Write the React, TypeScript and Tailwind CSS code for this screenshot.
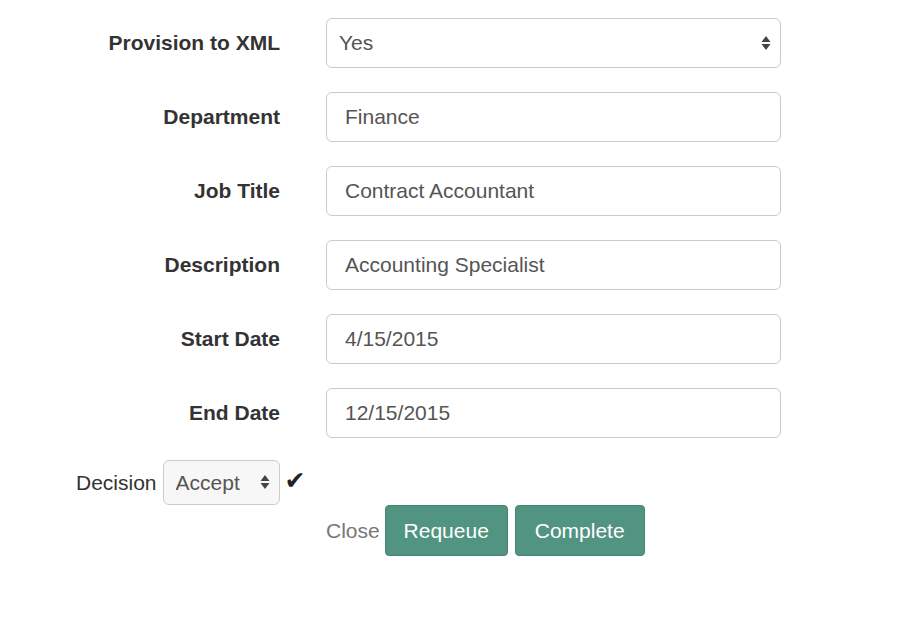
import { useState } from 'react';

const font = "font-['Helvetica_Neue','Liberation_Sans',Arial,sans-serif]";

function Arrows({ className }: { className?: string }) {
  return (
    <svg width="10" height="16" viewBox="0 0 10 16" className={className}>
      <path d="M5 1 L9.5 7 L0.5 7 Z" fill="#444" />
      <path d="M5 15 L9.5 9 L0.5 9 Z" fill="#444" />
    </svg>
  );
}

function Row({ label, children }: { label: string; children: React.ReactNode }) {
  return (
    <div className="flex items-center gap-[46px]">
      <label className="w-[280px] text-right text-[21px] font-bold text-[#333]">{label}</label>
      {children}
    </div>
  );
}

function TextField({ value }: { value: string }) {
  const [v, setV] = useState(value);
  return (
    <input
      type="text"
      value={v}
      onChange={(e) => setV(e.target.value)}
      className="w-[455px] h-[50px] px-[18px] rounded-[6px] border border-[#ccc] bg-white text-[21px] text-[#555] focus:outline-none"
    />
  );
}

export default function App() {
  const [provision, setProvision] = useState('Yes');
  const [decision, setDecision] = useState('Accept');

  const fields: [string, string][] = [
    ['Department', 'Finance'],
    ['Job Title', 'Contract Accountant'],
    ['Description', 'Accounting Specialist'],
    ['Start Date', '4/15/2015'],
    ['End Date', '12/15/2015'],
  ];

  return (
    <div className={`${font} w-[910px] h-[618px] bg-white pt-[18px]`}>
      <div className="flex flex-col gap-[24px]">
        <Row label="Provision to XML">
          <div className="relative w-[455px] h-[50px]">
            <select
              value={provision}
              onChange={(e) => setProvision(e.target.value)}
              className="appearance-none w-full h-full pl-[12px] rounded-[6px] border border-[#ccc] bg-white text-[21px] text-[#555] focus:outline-none"
            >
              <option>Yes</option>
              <option>No</option>
            </select>
            <Arrows className="absolute right-[10px] top-[17px] pointer-events-none" />
          </div>
        </Row>
        {fields.map(([label, value]) => (
          <Row key={label} label={label}>
            <TextField value={value} />
          </Row>
        ))}
      </div>

      <div className="flex items-center h-[45px] mt-[22px] ml-[76px]">
        <span className="text-[21px] text-[#333]">Decision</span>
        <div className="relative ml-[6px] w-[117px] h-[45px]">
          <select
            value={decision}
            onChange={(e) => setDecision(e.target.value)}
            className="appearance-none w-full h-full pl-[12px] rounded-[6px] border border-[#ccc] bg-[#f7f7f7] text-[21px] text-[#555] focus:outline-none"
          >
            <option>Accept</option>
            <option>Reject</option>
          </select>
          <Arrows className="absolute right-[10px] top-[14px] pointer-events-none" />
        </div>
        <span className="ml-[5px] -mt-[4px] leading-none text-[25px] text-[#222] font-['DejaVu_Sans',sans-serif]">✔</span>
      </div>

      <div className="flex items-center ml-[326px]">
        <span className="text-[21px] text-[#777]">Close</span>
        <button className="ml-[5px] w-[123px] h-[51px] rounded-[4px] border border-[#47836f] bg-[#529482] text-white text-[21px]">
          Requeue
        </button>
        <button className="ml-[7px] w-[130px] h-[51px] rounded-[4px] border border-[#47836f] bg-[#529482] text-white text-[21px]">
          Complete
        </button>
      </div>
    </div>
  );
}
